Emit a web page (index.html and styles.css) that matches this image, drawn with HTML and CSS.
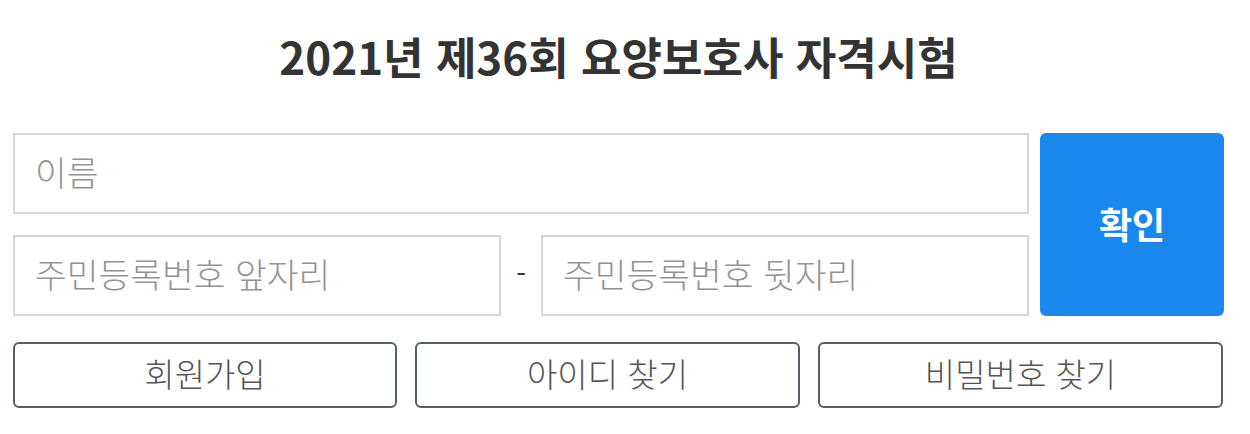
FILE: index.html
```html
<!DOCTYPE html>
<html lang="ko">
<head>
<meta charset="utf-8">
<title>2021년 제36회 요양보호사 자격시험</title>
<link rel="stylesheet" href="styles.css">
</head>
<body>
<div class="wrap">
  <h1 class="title">2021년 제36회 요양보호사 자격시험</h1>
  <form class="login">
    <div class="fields">
      <input class="field" type="text" placeholder="이름">
      <div class="jumin">
        <input class="field" type="text" placeholder="주민등록번호 앞자리">
        <span class="dash">-</span>
        <input class="field" type="password" placeholder="주민등록번호 뒷자리">
      </div>
    </div>
    <button class="submit" type="button">확인</button>
  </form>
  <div class="links">
    <button class="link" type="button">회원가입</button>
    <button class="link" type="button">아이디 찾기</button>
    <button class="link" type="button">비밀번호 찾기</button>
  </div>
</div>
</body>
</html>
```

FILE: styles.css
```css
html, body {
  margin: 0;
  padding: 0;
  background: #fff;
}
body {
  font-family: "Noto Sans CJK KR", "Noto Sans", sans-serif;
}
.wrap {
  width: 1211px;
  margin-left: 13px;
}
.title {
  margin: 25px 0 0;
  height: 63px;
  line-height: 63px;
  font-size: 44px;
  font-weight: 700;
  color: #333;
  text-align: center;
}
.login {
  margin-top: 45px;
  display: flex;
  gap: 11px;
}
.fields {
  width: 1016px;
  display: flex;
  flex-direction: column;
  gap: 21px;
}
.field {
  box-sizing: border-box;
  height: 81px;
  width: 100%;
  border: 2px solid #d6d6d6;
  padding: 0 0 6px 20px;
  font-family: inherit;
  font-size: 34.5px;
  font-weight: 300;
  color: #333;
  outline: none;
  background: #fff;
}
.field::placeholder {
  color: #939393;
}
.jumin {
  display: flex;
  align-items: center;
}
.jumin .field {
  width: 488px;
  flex: none;
}
.dash {
  width: 40px;
  text-align: center;
  font-size: 28px;
  font-weight: 400;
  color: #333;
  padding-bottom: 6px;
}
.submit {
  flex: 1;
  height: 183px;
  border: none;
  border-radius: 6px;
  background: #1a87ee;
  color: #fff;
  font-family: inherit;
  font-size: 36px;
  font-weight: 700;
  padding: 0 0 4px;
}
.links {
  margin-top: 26px;
  display: grid;
  grid-template-columns: 384px 385px 1fr;
  gap: 18px;
  width: 1210px;
}
.link {
  box-sizing: border-box;
  height: 66px;
  border: 2px solid #555e68;
  border-radius: 6px;
  background: #fff;
  color: #555;
  font-family: inherit;
  font-size: 33px;
  font-weight: 300;
  padding: 0 0 4px;
}
```
